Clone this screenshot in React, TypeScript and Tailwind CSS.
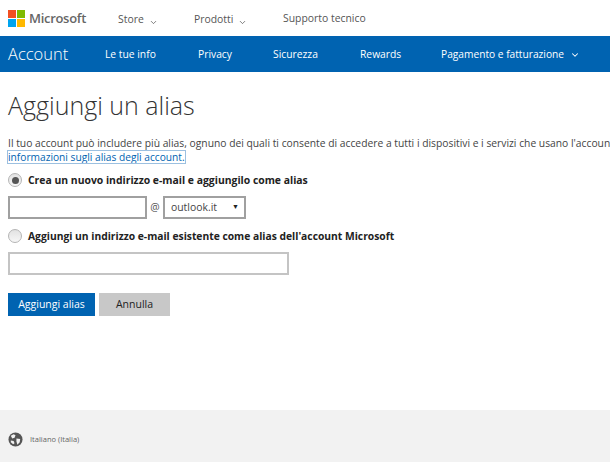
import { ChevronDown } from "lucide-react";

const font = { fontFamily: '"Open Sans", "Noto Sans", sans-serif' };

function MsLogo() {
  return (
    <svg width="17" height="17" viewBox="0 0 17 17" className="shrink-0">
      <rect x="0" y="0" width="8" height="8" fill="#f25022" />
      <rect x="9" y="0" width="8" height="8" fill="#7fba00" />
      <rect x="0" y="9" width="8" height="8" fill="#00a4ef" />
      <rect x="9" y="9" width="8" height="8" fill="#ffb900" />
    </svg>
  );
}

function Radio({ checked }: { checked?: boolean }) {
  return (
    <span className="w-[14px] h-[14px] rounded-full border border-[#b5b5b5] bg-gradient-to-b from-[#e2e2e2] to-[#f7f7f7] flex items-center justify-center shrink-0">
      {checked && <span className="w-[7px] h-[7px] rounded-full bg-[#555]" />}
    </span>
  );
}

function Globe() {
  return (
    <svg width="15" height="15" viewBox="0 0 16 16" className="shrink-0">
      <circle cx="8" cy="8" r="7.5" fill="#555" />
      <path d="M3 4 L6 2.5 L8 3.5 L7 6 L4.5 7 Z M9 7 L13 7.5 L12.5 11 L10 13.5 L9 10 Z M3 9 L6 9.5 L7 12 L5.5 13 L3 11 Z" fill="#f2f2f2" />
    </svg>
  );
}

export default function App() {
  return (
    <div className="w-[610px] h-[468px] overflow-hidden bg-white flex flex-col text-[#333]" style={font}>
      <div className="h-[36px] flex items-center pl-[8px]">
        <MsLogo />
        <span className="ml-[4px] w-[89px] text-[13px] font-semibold tracking-[-0.3px] text-[#666] leading-none">Microsoft</span>
        <div className="w-[76px] flex items-center text-[10.4px] text-[#555] pt-[4px]">
          Store
          <ChevronDown size={9} className="ml-[5px] mt-[6px]" />
        </div>
        <div className="w-[89px] flex items-center text-[10.4px] text-[#555] pt-[4px]">
          Prodotti
          <ChevronDown size={9} className="ml-[5px] mt-[6px]" />
        </div>
        <div className="text-[10.4px] text-[#555] pt-[1px]">Supporto tecnico</div>
      </div>

      <div className="h-[36px] bg-[#0063b1] flex items-center pl-[8px] text-white">
        <span className="w-[97px] text-[16.5px] font-light leading-none">Account</span>
        <span className="w-[93px] text-[10.3px] pt-[1px]">Le tue info</span>
        <span className="w-[75px] text-[10.3px] pt-[1px]">Privacy</span>
        <span className="w-[87px] text-[10.3px] pt-[1px]">Sicurezza</span>
        <span className="w-[81px] text-[10.3px] pt-[1px]">Rewards</span>
        <span className="text-[10.2px] pt-[1px]">Pagamento e fatturazione</span>
        <ChevronDown size={10} strokeWidth={2.5} className="ml-[6px] mt-[1px]" />
      </div>

      <div className="flex-1 pl-[8px]">
        <h1 className="mt-[18px] text-[25px] font-light leading-[30px] text-[#333]">Aggiungi un alias</h1>

        <p className="mt-[16px] text-[10.3px] leading-[14px] whitespace-nowrap text-[#444]">
          Il tuo account può includere più alias, ognuno dei quali ti consente di accedere a tutti i dispositivi e i servizi che usano l'accoun
        </p>
        <a className="block w-fit mt-[1px] text-[10.2px] leading-[12px] text-[#0063b1] outline outline-1 outline-[#9cc0e0]">
          informazioni sugli alias degli account.
        </a>

        <div className="mt-[9px] flex items-center gap-[6px] text-[10.4px] font-bold text-[#222] h-[16px]">
          <Radio checked />
          <span className="pt-[1px]">Crea un nuovo indirizzo e-mail e aggiungilo come alias</span>
        </div>

        <div className="mt-[8px] flex items-center">
          <div className="w-[139px] h-[23px] border-2 border-[#a0a0a0] bg-white" />
          <span className="w-[16px] text-center text-[10.5px] text-[#555]">@</span>
          <div className="w-[83px] h-[23px] border-2 border-[#a0a0a0] bg-white flex items-center justify-between pl-[6px] pr-[5px] text-[10.4px] text-[#444]">
            outlook.it
            <span className="text-[7px] text-[#222]">▼</span>
          </div>
        </div>

        <div className="mt-[9px] flex items-center gap-[6px] text-[10.3px] font-bold text-[#222] h-[16px]">
          <Radio />
          <span className="pt-[1px]">Aggiungi un indirizzo e-mail esistente come alias dell'account Microsoft</span>
        </div>

        <div className="mt-[8px] w-[281px] h-[23px] border-2 border-[#c4c4c4] bg-white" />

        <div className="mt-[18px] flex gap-[4px]">
          <button className="w-[87px] h-[23px] bg-[#0063b1] text-white text-[10.5px]">Aggiungi alias</button>
          <button className="w-[71px] h-[23px] bg-[#c8c8c8] text-[#222] text-[10.5px]">Annulla</button>
        </div>
      </div>

      <div className="h-[52px] bg-[#f2f2f2] mb-[6px] flex items-center pl-[8px] gap-[7px] pt-[7px]">
        <Globe />
        <span className="text-[7.5px] text-[#666]">Italiano (Italia)</span>
      </div>
    </div>
  );
}
